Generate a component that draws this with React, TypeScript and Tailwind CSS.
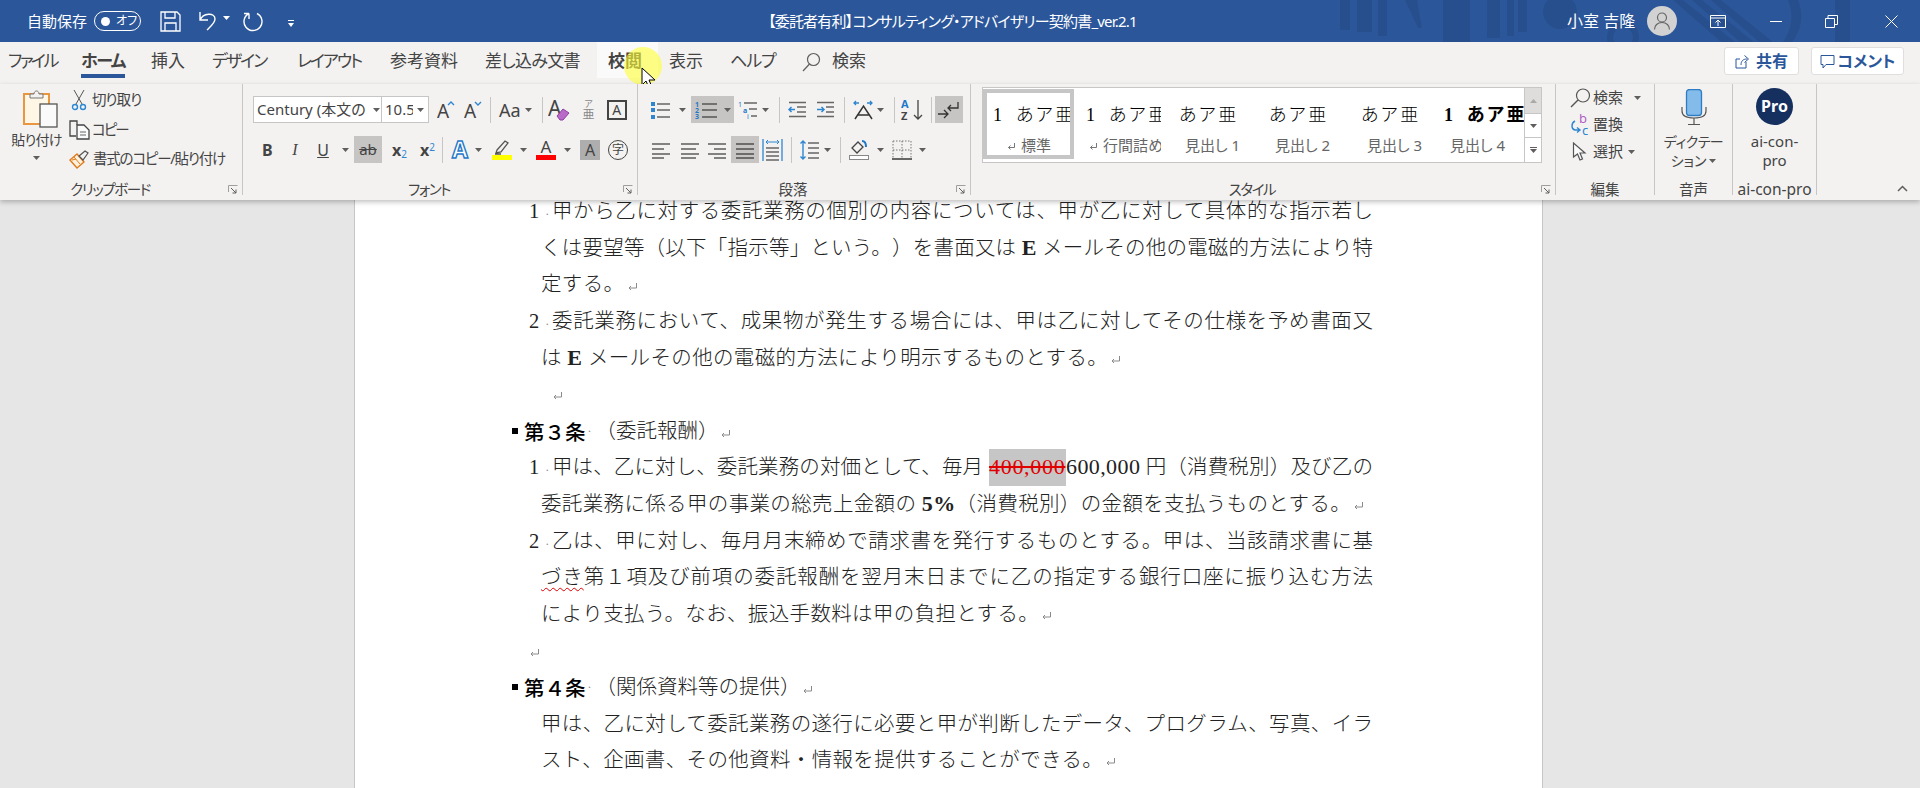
import React from "react";

const Caret = ({ className = "" }: { className?: string }) => (
  <svg width="7" height="4" viewBox="0 0 7 4" className={"shrink-0 " + className}>
    <path d="M0 0h7L3.5 4z" fill="#605e5c" />
  </svg>
);

const Sep = ({ className = "" }: { className?: string }) => (
  <div className={"w-px h-[26px] bg-[#c8c6c4] shrink-0 " + className} />
);

const Launcher = () => (
  <svg width="10" height="10" viewBox="0 0 10 10" className="absolute right-[4px] bottom-[0px]">
    <path d="M0.5 7V0.5H9.5" fill="none" stroke="#a19f9d" />
    <path d="M3 3l5 5M8 4.5V8H4.5" fill="none" stroke="#605e5c" />
  </svg>
);

const Return = ({ className = "" }: { className?: string }) => (
  <svg width="11" height="10" viewBox="0 0 11 10" className={"inline-block " + className}>
    <path d="M9.5 1v5H2M4 4L2 6l2 2" fill="none" stroke="#8a8a8a" />
  </svg>
);

const ReturnSm = () => (
  <svg width="9" height="9" viewBox="0 0 9 9" className="inline-block mr-[5px]">
    <path d="M7.5 1v4.5H1.5M3.5 3.5l-2 2 2 2" fill="none" stroke="#777" />
  </svg>
);

const TitlePattern = () => (
  <svg width="520" height="42" viewBox="0 0 520 42" className="absolute left-[1330px] top-0">
    <g fill="#284f8d">
      <rect x="10" y="0" width="10" height="30" />
      <rect x="27" y="0" width="15" height="32" />
      <rect x="48" y="0" width="9" height="36" />
      <path d="M75 0h12l5 28h-4z" />
      <rect x="113" y="0" width="27" height="42" />
      <rect x="157" y="0" width="13" height="38" />
      <rect x="177" y="0" width="7" height="36" />
      <rect x="188" y="0" width="9" height="32" />
      <circle cx="230" cy="12" r="17" />
      <path d="M343 0h10l52 42h-14zM362 0h10l52 42h-14zM381 0h10l52 42h-14z" />
      <path d="M458 0h10c6 14 4 30-6 42h-9c9-12 11-28 5-42z" />
      <rect x="505" y="0" width="15" height="42" />
    </g>
    <circle cx="293" cy="37" r="13" fill="none" stroke="#284f8d" strokeWidth="6" />
  </svg>
);

const TitleBar = () => (
  <div className="relative flex items-center h-[42px] bg-[#2b579a] text-white shrink-0">
    <TitlePattern />
    <span className="ml-[27px] text-[15px] leading-none">自動保存</span>
    <div className="relative ml-[7px] flex items-center w-[47px] h-[20px] rounded-full border border-white">
      <div className="ml-[6px] w-[9px] h-[9px] rounded-full bg-white" />
      <span className="ml-[6px] text-[12px] leading-none">オフ</span>
    </div>
    <svg width="21" height="21" viewBox="0 0 21 21" className="ml-[19px]">
      <path d="M1 1h16l3 3v16H1zM5 1v6h10V1M5 20v-8h11v8" fill="none" stroke="#fff" strokeWidth="1.3" />
    </svg>
    <svg width="20" height="22" viewBox="0 0 20 22" className="ml-[16px]">
      <path d="M3 2v8h8M3 10C6 3 18 2 18 9c0 4-5 8-8 11" fill="none" stroke="#fff" strokeWidth="1.4" />
    </svg>
    <Caret className="ml-[6px] mb-[6px] [&>path]:fill-white" />
    <svg width="21" height="22" viewBox="0 0 21 22" className="ml-[13px]">
      <path d="M14 3.5a9 9 0 1 1-8 0M6 3.5V9M6 3.5H1" fill="none" stroke="#fff" strokeWidth="1.4" />
    </svg>
    <svg width="6" height="7" viewBox="0 0 6 7" className="ml-[24px] mt-[4px]">
      <path d="M0 0h6v1H0zM0 3h6L3 7z" fill="#fff" />
    </svg>
    <span className="relative ml-[474px] text-[15px] leading-none w-[368px] whitespace-nowrap tracking-[-0.8px]">
      【委託者有利】コンサルティング・アドバイザリー契約書_ver.2.1
    </span>
    <span className="relative ml-[431px] text-[16px] leading-none">小室 吉隆</span>
    <div className="relative ml-[12px] w-[30px] h-[30px] rounded-full bg-[#d2d2d2] flex items-center justify-center">
      <svg width="20" height="20" viewBox="0 0 20 20">
        <path d="M10 2a4.5 4.5 0 1 0 0 9 4.5 4.5 0 0 0 0-9zM2.5 18.5c0-4 3-7 7.5-7s7.5 3 7.5 7" fill="none" stroke="#666" strokeWidth="1.2" />
      </svg>
    </div>
    <svg width="16" height="13" viewBox="0 0 16 13" className="relative ml-[33px]">
      <path d="M.5.5h15v12H.5zM.5 3h15M8 11V5M5.5 7.5L8 5l2.5 2.5" fill="none" stroke="#fff" />
    </svg>
    <div className="relative ml-[44px] w-[12px] h-px bg-white" />
    <svg width="13" height="13" viewBox="0 0 13 13" className="relative ml-[43px]">
      <path d="M.5 3.5h9v9h-9zM3 3.5v-3h9.5v9h-3" fill="none" stroke="#fff" />
    </svg>
    <svg width="13" height="13" viewBox="0 0 13 13" className="relative ml-[47px]">
      <path d="M.5.5l12 12M12.5.5l-12 12" fill="none" stroke="#fff" />
    </svg>
  </div>
);

const tabs = [
  { label: "ファイル", cls: "ml-[8px] w-[47px] tracking-[-2.5px]" },
  { label: "ホーム", cls: "ml-[26px] w-[44px] tracking-[-1.5px] font-bold border-b-4 border-[#2b579a]" },
  { label: "挿入", cls: "ml-[26px] w-[33px]" },
  { label: "デザイン", cls: "ml-[28px] w-[54px] tracking-[-2px]" },
  { label: "レイアウト", cls: "ml-[31px] w-[64px] tracking-[-2px]" },
  { label: "参考資料", cls: "ml-[29px] w-[68px]" },
  { label: "差し込み文書", cls: "ml-[27px] w-[95px] tracking-[-0.7px]" },
];

const Tabs = () => (
  <div className="relative flex items-start h-[42px] bg-[#f3f2f1] text-[17px] text-[#444] shrink-0">
    {tabs.map((t) => (
      <div key={t.label} className={"h-[36px] leading-[38px] whitespace-nowrap " + t.cls}>
        {t.label}
      </div>
    ))}
    <div className="ml-[17px] w-[61px] h-[36px] pl-[11px] bg-[#fafafa] leading-[38px] font-bold">校閲</div>
    <div className="ml-[11px] w-[34px] h-[36px] leading-[38px]">表示</div>
    <div className="ml-[27px] w-[43px] h-[36px] leading-[38px] tracking-[-1px] whitespace-nowrap">ヘルプ</div>
    <svg width="19" height="20" viewBox="0 0 19 20" className="ml-[29px] mt-[10px]">
      <circle cx="11.5" cy="7.5" r="6" fill="none" stroke="#605e5c" strokeWidth="1.2" />
      <path d="M7.5 12L1 19" stroke="#605e5c" strokeWidth="1.2" />
    </svg>
    <div className="ml-[11px] h-[36px] leading-[38px]">検索</div>
    <div className="ml-auto mt-[5px] flex items-center justify-center w-[75px] h-[28px] bg-white border border-[#e1dfdd] rounded-[3px] text-[16px] text-[#2b579a] font-bold">
      <svg width="15" height="15" viewBox="0 0 15 15" className="mr-[6px]">
        <path d="M11 8v6H1V5h4M6 11c0-4 2-6 6-6M9.500 1.500L13.500 5 9.500 8.500" fill="none" stroke="#2b579a" />
      </svg>
      共有
    </div>
    <div className="ml-[12px] mr-[16px] mt-[5px] flex items-center justify-center w-[93px] h-[28px] bg-white border border-[#e1dfdd] rounded-[3px] text-[16px] text-[#2b579a] font-bold">
      <svg width="15" height="15" viewBox="0 0 15 15" className="mr-[3px]">
        <path d="M1 1.500h13v9H6L3 14v-3.500H1z" fill="none" stroke="#2b579a" />
      </svg>
      コメント
    </div>
    <div className="absolute left-[624px] top-[5px] w-[38px] h-[38px] rounded-full bg-[#ffff33]/60" />
    <svg width="18" height="24" viewBox="0 0 18 24" className="absolute left-[641px] top-[25px]">
      <path d="M1 1v17l4-4 3 7 3-1-3-7h6z" fill="#fff" stroke="#000" />
    </svg>
  </div>
);

const Group = ({
  w,
  label,
  launcher,
  labelCls = "",
  children,
}: {
  w: string;
  label: string;
  launcher?: boolean;
  labelCls?: string;
  children: React.ReactNode;
}) => (
  <div className={"relative flex flex-col h-[111px] border-r border-[#c8c6c4] shrink-0 " + w}>
    <div className="flex-1 min-h-0">{children}</div>
    <div className={"h-[12px] leading-[12px] text-center text-[14.5px] text-[#444] whitespace-nowrap " + (launcher ? "pr-[22px] tracking-[-1.4px] " : "") + labelCls}>
      {label}
    </div>
    {launcher && <Launcher />}
  </div>
);

const Clipboard = () => (
  <div className="flex">
    <div className="w-[69px] flex flex-col items-center pt-[4px]">
      <svg width="36" height="40" viewBox="0 0 36 40" className="ml-[11px]">
        <rect x="2" y="6" width="25" height="30" fill="#fff6e6" stroke="#e8963f" strokeWidth="2" />
        <path d="M8 10V6h4c0-4 5-4 5 0h4v4z" fill="#f3f2f1" stroke="#777" />
        <rect x="18" y="16" width="17" height="23" fill="#fafafa" stroke="#555" strokeWidth="1.300" />
      </svg>
      <span className="mt-[2px] ml-[4px] text-[14px] leading-[20px] text-[#444] whitespace-nowrap tracking-[-0.7px]">貼り付け</span>
      <Caret className="mt-[6px] ml-[4px]" />
    </div>
    <div className="flex flex-col text-[14.5px] text-[#444] whitespace-nowrap pt-[1px]">
      <div className="flex items-center h-[30px]">
        <svg width="16" height="22" viewBox="0 0 16 22" className="ml-[2px]">
          <path d="M3 1l8 14M13 1L5 15" stroke="#555" fill="none" />
          <circle cx="4" cy="18" r="2.500" fill="none" stroke="#2e86d1" strokeWidth="1.400" />
          <circle cx="12" cy="18" r="2.500" fill="none" stroke="#2e86d1" strokeWidth="1.400" />
        </svg>
        <span className="ml-[5px] tracking-[-1px]">切り取り</span>
      </div>
      <div className="flex items-center h-[29px]">
        <svg width="21" height="20" viewBox="0 0 21 20">
          <path d="M7 16H1V1h7l0 4" fill="none" stroke="#444" strokeWidth="1.300" />
          <path d="M8 5h7l5 5v9H8z" fill="#fafafa" stroke="#444" strokeWidth="1.300" />
          <path d="M11 12h6M11 15h6" stroke="#666" />
        </svg>
        <span className="ml-[2px] tracking-[-2px]">コピー</span>
      </div>
      <div className="flex items-center h-[30px]">
        <svg width="21" height="20" viewBox="0 0 21 20">
          <path d="M1 11l7-6 7 8-7 6z" fill="#fdf0dd" stroke="#e07b1c" strokeWidth="1.400" />
          <path d="M5 8l6 7M3 11l4-1" stroke="#e07b1c" />
          <path d="M10 7l6-5 3 2-5 7z" fill="#f3f2f1" stroke="#555" strokeWidth="1.200" />
        </svg>
        <span className="ml-[3px] tracking-[-1.2px]">書式のコピー/貼り付け</span>
      </div>
    </div>
  </div>
);

const AWithMark = ({ up }: { up: boolean }) => (
  <svg width="18" height="22" viewBox="0 0 18 22">
    <text x="0" y="19" fontSize="19" fill="#444">A</text>
    <path d={up ? "M11 6l3-3 3 3" : "M11 3l3 3 3-3"} fill="none" stroke="#2e86d1" strokeWidth="1.400" />
  </svg>
);

const Font = () => (
  <div className="flex flex-col pt-[12px] text-[#444]">
    <div className="flex items-center h-[27px]">
      <div className="ml-[10px] flex items-center w-[129px] h-[27px] bg-white border border-[#c8c6c4] text-[15px] pl-[3px] whitespace-nowrap overflow-hidden">
        <span className="w-[114px] overflow-hidden">Century (本文の</span>
        <Caret className="ml-[2px]" />
      </div>
      <div className="flex items-center w-[47px] h-[27px] bg-white border border-l-0 border-[#c8c6c4] text-[15px] pl-[3px]">
        <span className="w-[28px] overflow-hidden">10.5</span>
        <Caret className="ml-[4px]" />
      </div>
      <div className="ml-[8px]"><AWithMark up /></div>
      <div className="ml-[9px]"><AWithMark up={false} /></div>
      <Sep className="ml-[8px]" />
      <span className="ml-[8px] text-[18px] leading-none">Aa</span>
      <Caret className="ml-[4px]" />
      <Sep className="ml-[10px]" />
      <svg width="22" height="24" viewBox="0 0 22 24" className="ml-[5px]">
        <text x="0" y="18" fontSize="21" fill="#444">A</text>
        <path d="M9 18l6-7 6 4-6 7h-3z" fill="#b96ac9" stroke="#8e3fa0" />
      </svg>
      <div className="ml-[13px] flex flex-col items-center w-[12px] text-[#888] leading-none">
        <span className="text-[9px]">ア</span>
        <span className="text-[12px] mt-[1px]">亜</span>
      </div>
      <div className="ml-[12px] w-[20px] h-[20px] border-2 border-[#444] flex items-center justify-center text-[14px] leading-none">A</div>
    </div>
    <div className="flex items-center h-[27px] mt-[13px]">
      <span className="ml-[19px] w-[10px] font-bold text-[16px] text-center">B</span>
      <span className="ml-[18px] w-[10px] italic text-[16px] text-center [font-family:'Liberation_Serif',serif]">I</span>
      <span className="ml-[17px] w-[12px] underline text-[16px] text-center">U</span>
      <Caret className="ml-[13px]" />
      <div className="ml-[5px] w-[28px] h-[27px] bg-[#c6c5c3] flex items-center justify-center text-[15px] line-through">ab</div>
      <span className="ml-[10px] w-[14px] font-bold text-[16px] leading-none">x<sub className="text-[10px] font-normal text-[#2e86d1]">2</sub></span>
      <span className="ml-[14px] w-[14px] font-bold text-[16px] leading-none">x<sup className="text-[10px] font-normal text-[#2e86d1]">2</sup></span>
      <Sep className="ml-[8px]" />
      <svg width="20" height="22" viewBox="0 0 20 22" className="ml-[8px]">
        <text x="1" y="19" fontSize="23" fontWeight="700" fill="#fff" stroke="#1f78c8" strokeWidth="1.400">A</text>
      </svg>
      <Caret className="ml-[4px]" />
      <div className="ml-[10px] flex flex-col w-[20px]">
        <svg width="20" height="16" viewBox="0 0 20 16">
          <path d="M5 11l8-9 3 2-7 9-5 1zM3 15h6" fill="none" stroke="#555" strokeWidth="1.300" />
        </svg>
        <div className="h-[5px] bg-[#ffff00]" />
      </div>
      <Caret className="ml-[8px]" />
      <div className="ml-[9px] flex flex-col items-center w-[20px]">
        <span className="text-[17px] leading-[16px]">A</span>
        <div className="w-[20px] h-[5px] bg-[#ff0000]" />
      </div>
      <Caret className="ml-[8px]" />
      <div className="ml-[9px] w-[20px] h-[20px] bg-[#aeaeae] flex items-center justify-center text-[16px]">A</div>
      <div className="ml-[8px] w-[20px] h-[20px] rounded-full border border-[#444] flex items-center justify-center text-[12px] leading-none">字</div>
    </div>
  </div>
);

const Lines = ({ ys, x1 = 1, x2 = 19, w = 20, h = 18, color = "#666" }: { ys: [number, number][]; x1?: number; x2?: number; w?: number; h?: number; color?: string }) => (
  <svg width={w} height={h} viewBox={`0 0 ${w} ${h}`}>
    {ys.map(([y, xe], i) => (
      <path key={i} d={`M${x1 + (xe < 0 ? -xe : 0)} ${y}H${xe > 0 ? xe : x2}`} stroke={color} strokeWidth="1.600" />
    ))}
  </svg>
);

const Paragraph = () => (
  <div className="flex flex-col pt-[12px] text-[#444]">
    <div className="flex items-center h-[27px]">
      <svg width="20" height="20" viewBox="0 0 20 20" className="ml-[13px]">
        <path d="M0 2h4v4H0zM0 8h4v4H0zM0 15h4v4H0z" fill="#2e86d1" />
        <path d="M6 4h13M6 10h13M6 17h13" stroke="#666" strokeWidth="1.500" />
      </svg>
      <Caret className="ml-[8px]" />
      <div className="ml-[5px] flex items-center w-[43px] h-[27px] bg-[#c6c5c3] pl-[4px]">
        <svg width="24" height="20" viewBox="0 0 24 20">
          <text x="0" y="7" fontSize="7" fontWeight="700" fill="#1f78c8">1</text>
          <text x="0" y="13" fontSize="7" fontWeight="700" fill="#1f78c8">2</text>
          <text x="0" y="19" fontSize="7" fontWeight="700" fill="#1f78c8">3</text>
          <path d="M7 4h15M7 10h15M7 17h15" stroke="#555" strokeWidth="1.500" />
        </svg>
        <Caret className="ml-[5px]" />
      </div>
      <svg width="20" height="20" viewBox="0 0 20 20" className="ml-[4px]">
        <text x="0" y="7" fontSize="7" fill="#1f78c8">1</text>
        <text x="5" y="13" fontSize="7" fontWeight="700" fill="#1f78c8">a</text>
        <text x="9" y="19" fontSize="7" fill="#1f78c8">i</text>
        <path d="M6 3h13M11 9h8M13 16h6" stroke="#666" strokeWidth="1.500" />
      </svg>
      <Caret className="ml-[4px]" />
      <Sep className="ml-[10px]" />
      <svg width="19" height="17" viewBox="0 0 19 17" className="ml-[8px]">
        <path d="M1 1.500h17M9 6h9M9 11h9M1 15.500h17" stroke="#666" strokeWidth="1.500" />
        <path d="M7 8.500H1M3.500 6L1 8.500 3.500 11" fill="none" stroke="#2e86d1" strokeWidth="1.500" />
      </svg>
      <svg width="19" height="17" viewBox="0 0 19 17" className="ml-[9px]">
        <path d="M1 1.500h17M10 6h8M10 11h8M1 15.500h17" stroke="#666" strokeWidth="1.500" />
        <path d="M1 8.500h7M5.500 6L8 8.500 5.500 11" fill="none" stroke="#2e86d1" strokeWidth="1.500" />
      </svg>
      <Sep className="ml-[9px]" />
      <svg width="21" height="20" viewBox="0 0 21 20" className="ml-[8px]">
        <path d="M2 19L10.500 6 19 19M5 15h11" fill="none" stroke="#333" strokeWidth="1.500" />
        <path d="M1 3h5M3 1L1 3l2 2M14 3h5M17 1l2 2-2 2" fill="none" stroke="#2e86d1" strokeWidth="1.300" />
      </svg>
      <Caret className="ml-[3px]" />
      <Sep className="ml-[10px]" />
      <svg width="23" height="22" viewBox="0 0 23 22" className="ml-[6px]">
        <text x="0" y="9" fontSize="11" fontWeight="700" fill="#1f78c8">A</text>
        <text x="0" y="21" fontSize="11" fontWeight="700" fill="#444">Z</text>
        <path d="M17 1v19M13 16l4 4 4-4" fill="none" stroke="#444" strokeWidth="1.300" />
      </svg>
      <Sep className="ml-[7px]" />
      <div className="ml-[3px] flex items-center justify-center w-[28px] h-[27px] bg-[#c6c5c3]">
        <svg width="24" height="20" viewBox="0 0 24 20">
          <path d="M1 14h10M7 10l4 4-4 4" fill="none" stroke="#333" strokeWidth="1.300" />
          <path d="M21 2v6H11M14 5l-3 3 3 3" fill="none" stroke="#333" strokeWidth="1.300" />
        </svg>
      </div>
    </div>
    <div className="flex items-center h-[27px] mt-[13px]">
      <div className="ml-[13px]"><Lines ys={[[3, 19], [8, 13], [13, 19], [17, 13]]} /></div>
      <div className="ml-[9px]"><Lines ys={[[3, 19], [8, 16], [13, 19], [17, 16]]} /></div>
      <div className="ml-[7px]"><Lines ys={[[3, 19], [8, -6], [13, 19], [17, -6]]} /></div>
      <div className="ml-[4px] flex items-center justify-center w-[28px] h-[27px] bg-[#c6c5c3]">
        <Lines ys={[[3, 19], [8, 19], [13, 19], [17, 19]]} color="#555" />
      </div>
      <svg width="21" height="24" viewBox="0 0 21 24" className="ml-[3px]">
        <path d="M1 1v22M20 1v22" stroke="#2e86d1" strokeWidth="1.300" />
        <path d="M4 4h13M6 2L4 4l2 2M15 2l2 2-2 2" fill="none" stroke="#2e86d1" />
        <path d="M4 10h13M4 14h13M4 18h13M4 22h13" stroke="#666" strokeWidth="1.300" />
      </svg>
      <Sep className="ml-[8px]" />
      <svg width="20" height="20" viewBox="0 0 20 20" className="ml-[8px]">
        <path d="M3 1v18M0.500 3.500L3 1l2.500 2.500M0.500 16.500L3 19l2.500-2.500" fill="none" stroke="#2e86d1" strokeWidth="1.400" />
        <path d="M8 3h11M8 8h11M8 13h11M8 18h11" stroke="#666" strokeWidth="1.500" />
      </svg>
      <Caret className="ml-[4px]" />
      <Sep className="ml-[9px]" />
      <svg width="20" height="21" viewBox="0 0 20 21" className="ml-[8px]">
        <path d="M3 9l6-6 5 5-6 6z" fill="none" stroke="#444" strokeWidth="1.300" />
        <path d="M13 2c3 0 4 3 4 6" fill="none" stroke="#1f78c8" strokeWidth="2" />
        <rect x="0.500" y="16.500" width="19" height="4" fill="#fff" stroke="#888" />
      </svg>
      <Caret className="ml-[8px]" />
      <svg width="20" height="20" viewBox="0 0 20 20" className="ml-[8px]">
        <path d="M1 1h18v18M1 1v18M10 1v18M1 10h18" fill="none" stroke="#777" strokeDasharray="1.500 1.500" />
        <path d="M0 19h20" stroke="#444" strokeWidth="1.600" />
      </svg>
      <Caret className="ml-[7px]" />
    </div>
  </div>
);

const styleItems = [
  { num: true, label: "標準", ret: true, sel: true, pl: "pl-[6px]" },
  { num: true, label: "行間詰め", ret: true, pl: "pl-[8px]" },
  { label: "見出し 1", pl: "pl-[10px]" },
  { label: "見出し 2", pl: "pl-[9px]" },
  { label: "見出し 3", pl: "pl-[10px]" },
  { num: true, bold: true, label: "見出し 4", pl: "pl-[2px]" },
];

const StyleGallery = () => (
  <div className="flex ml-[11px] mt-[3px] h-[76px] w-[560px] bg-white border border-[#c8c6c4] overflow-hidden">
    <div className="flex flex-1 min-w-0 overflow-hidden">
      {styleItems.map((s) => (
        <div
          key={s.label}
          className={
            "shrink-0 w-[91px] h-[70px] mt-[1px] flex flex-col overflow-hidden " +
            s.pl +
            (s.sel ? " border-[4px] border-[#c6c6c6]" : " border-[4px] border-white")
          }
        >
          <div
            className={
              "h-[38px] leading-[42px] text-[18px] text-black whitespace-nowrap " +
              (s.bold ? "font-bold" : "font-light")
            }
          >
            {s.num && <span className="mr-[14px] [font-family:'Liberation_Serif',serif]">1</span>}
            <span className="tracking-[2.5px]">あア亜</span>
          </div>
          <div className={"h-[28px] leading-[28px] text-[15px] text-[#666] whitespace-nowrap " + (s.sel ? "pl-[14px]" : s.ret ? "pl-[3px]" : "pl-[6px]")}>
            {s.ret && <ReturnSm />}
            {s.label}
          </div>
        </div>
      ))}
    </div>
    <div className="flex flex-col w-[17px] shrink-0 border-l border-[#c8c6c4]">
      <div className="h-[26px] bg-[#dedddc] flex items-center justify-center border-b border-[#c8c6c4]">
        <Caret className="rotate-180 opacity-40" />
      </div>
      <div className="h-[24px] flex items-center justify-center border-b border-[#c8c6c4]">
        <Caret />
      </div>
      <div className="flex-1 flex flex-col items-center justify-center gap-[1px]">
        <div className="w-[7px] h-px bg-[#605e5c]" />
        <Caret />
      </div>
    </div>
  </div>
);

const Editing = () => (
  <div className="flex flex-col text-[15px] text-[#444] pl-[14px] whitespace-nowrap">
    <div className="flex items-center h-[27px]">
      <svg width="21" height="20" viewBox="0 0 21 20">
        <circle cx="13" cy="7.500" r="6.500" fill="none" stroke="#555" strokeWidth="1.200" />
        <path d="M8 12L1 19" stroke="#555" strokeWidth="1.400" />
      </svg>
      <span className="ml-[2px]">検索</span>
      <Caret className="ml-[11px]" />
    </div>
    <div className="flex items-center h-[27px]">
      <svg width="21" height="22" viewBox="0 0 21 22">
        <text x="9" y="9" fontSize="13" fill="#b05fc4">b</text>
        <text x="12" y="21" fontSize="13" fill="#2e86d1">c</text>
        <path d="M5 7C1 9 1 15 5 16h5M7 13.500L10 16l-3 2.500" fill="none" stroke="#2e86d1" strokeWidth="1.400" />
      </svg>
      <span className="ml-[2px]">置換</span>
    </div>
    <div className="flex items-center h-[27px]">
      <svg width="16" height="20" viewBox="0 0 16 20" className="ml-[2px]">
        <path d="M1.500 1v14l4-3 2.500 6 2.500-1-2.500-6h5z" fill="#fafafa" stroke="#555" strokeWidth="1.200" />
      </svg>
      <span className="ml-[5px]">選択</span>
      <Caret className="ml-[5px]" />
    </div>
  </div>
);

const Dictate = () => (
  <div className="flex flex-col items-center pt-[5px] text-[14px] leading-[19px] text-[#444] whitespace-nowrap">
    <svg width="26" height="36" viewBox="0 0 26 36">
      <rect x="5.500" y="0.500" width="15" height="26" rx="3" fill="#83bbea" stroke="#2e7cc4" strokeWidth="1.300" />
      <path d="M1 18v4c0 5 4 7 12 7s12-2 12-7v-4M13 29v6M7 35.500h12" fill="none" stroke="#555" strokeWidth="1.200" />
    </svg>
    <span className="mt-[7px] tracking-[-0.5px]">ディクテー</span>
    <span className="flex items-center">ション<Caret className="ml-[3px]" /></span>
  </div>
);

const AiPro = () => (
  <div className="flex flex-col items-center pt-[4px] text-[15px] leading-[19px] text-[#444] whitespace-nowrap">
    <div className="flex items-center justify-center w-[37px] h-[37px] rounded-full bg-[#15305f] text-white font-bold text-[16px]">Pro</div>
    <span className="mt-[7px]">ai-con-</span>
    <span>pro</span>
  </div>
);

const Ribbon = () => (
  <div className="relative z-10 flex h-[116px] bg-[#f3f2f1] shrink-0 shadow-[0_2px_5px_rgba(0,0,0,0.25)]">
    <Group w="w-[243px]" label="クリップボード" launcher><Clipboard /></Group>
    <Group w="w-[395px]" label="フォント" launcher><Font /></Group>
    <Group w="w-[333px]" label="段落" launcher labelCls="tracking-normal"><Paragraph /></Group>
    <Group w="w-[585px]" label="スタイル" launcher><StyleGallery /></Group>
    <Group w="w-[99px]" label="編集"><Editing /></Group>
    <Group w="w-[78px]" label="音声"><Dictate /></Group>
    <Group w="w-[84px]" label="ai-con-pro" labelCls="text-[15.5px]"><AiPro /></Group>
    <div className="flex-1 flex justify-end items-end pr-[12px] pb-[8px]">
      <svg width="11" height="7" viewBox="0 0 11 7">
        <path d="M1 6l4.500-4.500L10 6" fill="none" stroke="#605e5c" strokeWidth="1.500" />
      </svg>
    </div>
  </div>
);

const Full = ({ children }: { children: React.ReactNode }) => (
  <div className="ml-[186px] w-[832px] h-[36.6px] [text-align:justify] [text-align-last:justify]">{children}</div>
);

const Plain = ({ children }: { children: React.ReactNode }) => (
  <div className="ml-[186px] w-[860px] h-[36.6px] whitespace-nowrap tracking-[0.35px]">{children}</div>
);

const Numbered = ({ n, children }: { n: string; children: React.ReactNode }) => (
  <div className="flex ml-[174px] w-[844px] h-[36.6px]">
    <span className="w-[23px] shrink-0 whitespace-nowrap">
      {n}
      <span className="ml-[6px] text-[12px] text-[#888]">·</span>
    </span>
    <div className="flex-1 min-w-0 [text-align:justify] [text-align-last:justify]">{children}</div>
  </div>
);

const Heading = ({ title, sub }: { title: string; sub: string }) => (
  <div className="flex items-center ml-[157px] h-[36.6px] whitespace-nowrap">
    <span className="w-[6px] h-[6px] bg-black mr-[6px] shrink-0" />
    <span className="font-medium text-black [font-family:'Noto_Sans_CJK_JP',sans-serif]">{title}</span>
    <span className="ml-[2px] w-[6px] text-[12px] text-[#888]">·</span>
    <span className="ml-[2px]">{sub}</span>
    <Return className="ml-[1px] mt-[6px]" />
  </div>
);

const Num = ({ children, bold }: { children: React.ReactNode; bold?: boolean }) => (
  <span className={"text-[22px] tracking-[0.4px] " + (bold ? "font-bold" : "font-normal")}>{children}</span>
);

const Doc = () => (
  <div className="flex-1 min-h-0 bg-[#e6e6e6] overflow-hidden">
    <div className="flex flex-col ml-[354px] w-[1189px] h-full bg-white border-x border-[#c6c6c6]">
      <div className="-mt-[6.8px] text-[20.5px] leading-[36.6px] text-[#222] font-light [text-spacing-trim:space-all] [font-family:'Liberation_Serif','Noto_Sans_CJK_JP',serif]">
        <Numbered n="1">甲から乙に対する委託業務の個別の内容については、甲が乙に対して具体的な指示若し</Numbered>
        <Full>くは要望等（以下「指示等」という。）を書面又は <Num bold>E</Num> メールその他の電磁的方法により特</Full>
        <Plain>定する。<Return className="ml-[3px]" /></Plain>
        <Numbered n="2">委託業務において、成果物が発生する場合には、甲は乙に対してその仕様を予め書面又</Numbered>
        <Plain>は <Num bold>E</Num> メールその他の電磁的方法により明示するものとする。<Return className="ml-[2px]" /></Plain>
        <div className="ml-[197px] h-[36.6px]"><Return /></div>
        <Heading title="第３条" sub="（委託報酬）" />
        <div className="flex ml-[174px] w-[844px] h-[36.6px]">
          <span className="w-[23px] shrink-0 whitespace-nowrap">
            1<span className="ml-[6px] text-[12px] text-[#888]">·</span>
          </span>
          <div className="w-[431px] shrink-0 whitespace-nowrap [text-align:justify] [text-align-last:justify]">甲は、乙に対し、委託業務の対価として、毎月</div>
          <span className="ml-[6px] w-[77px] h-[37px] shrink-0 bg-[#c6c6c6] text-[22px] tracking-[0.7px] font-normal text-[#e00000] line-through whitespace-nowrap">400,000</span>
          <div className="flex-1 min-w-0 [text-align:justify] [text-align-last:justify]">
            <Num>600,000</Num> 円（消費税別）及び乙の
          </div>
        </div>
        <Plain>委託業務に係る甲の事業の総売上金額の <Num bold>5%</Num>（消費税別）の金額を支払うものとする。<Return className="ml-[2px]" /></Plain>
        <Numbered n="2">乙は、甲に対し、毎月月末締めで請求書を発行するものとする。甲は、当該請求書に基</Numbered>
        <Full>
          <span className="underline decoration-wavy decoration-[#e00000] decoration-1 underline-offset-[3px]">づき</span>
          第１項及び前項の委託報酬を翌月末日までに乙の指定する銀行口座に振り込む方法
        </Full>
        <Plain>により支払う。なお、振込手数料は甲の負担とする。<Return className="ml-[2px]" /></Plain>
        <div className="ml-[174px] h-[36.6px]"><Return /></div>
        <Heading title="第４条" sub="（関係資料等の提供）" />
        <Full>甲は、乙に対して委託業務の遂行に必要と甲が判断したデータ、プログラム、写真、イラ</Full>
        <Plain>スト、企画書、その他資料・情報を提供することができる。<Return className="ml-[2px]" /></Plain>
      </div>
    </div>
  </div>
);

export default function App() {
  return (
    <div className="flex flex-col w-[1920px] h-[788px] overflow-hidden [font-family:'Noto_Sans','Noto_Sans_CJK_JP',sans-serif]">
      <div className="relative z-10 shrink-0 [font-feature-settings:'palt']">
        <TitleBar />
        <Tabs />
        <Ribbon />
      </div>
      <Doc />
    </div>
  );
}
